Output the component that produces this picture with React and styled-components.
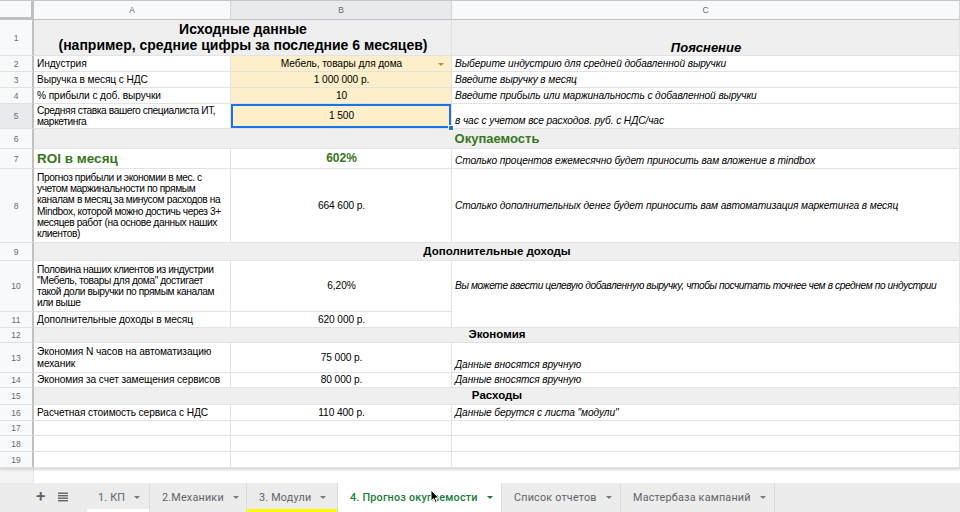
import React from "react";
import styled, { createGlobalStyle, css } from "styled-components";

const GlobalStyle = createGlobalStyle`
  html, body {
    margin: 0;
    padding: 0;
    background: #ffffff;
  }
  body {
    font-family: "Liberation Sans", Arial, sans-serif;
    color: #000;
  }
`;

const Page = styled.div`
  width: 960px;
  height: 512px;
  overflow: hidden;
  display: flex;
  flex-direction: column;
  position: relative;
  background: #fff;
`;

const Sheet = styled.div`
  display: grid;
  grid-template-columns: 34px 197px 221px 1fr;
  grid-template-rows: 19px 36px 16px 16px 16px 25px 20px 20px 74px 18px 51px 16px 15px 30px 15px 17px 16px 15px 16px 16px;
  border-top: 1px solid #c7c7c7;
  box-shadow: 0 2px 2px rgba(0, 0, 0, 0.12);
  position: relative;
  z-index: 1;
`;

const Corner = styled.div`
  background: #f8f9fa;
  border-right: 3px solid #c0c0c0;
  border-bottom: 3px solid #c0c0c0;
  box-sizing: border-box;
`;

const ColHead = styled.div`
  background: ${(p) => (p.$selected ? "#e8eaed" : "#f8f9fa")};
  border-right: 1px solid #d4d4d4;
  border-bottom: 1px solid #c0c0c0;
  box-sizing: border-box;
  display: flex;
  align-items: center;
  justify-content: center;
  font-size: 8.5px;
  color: #6b6b6b;
`;

const RowHead = styled.div`
  background: ${(p) => (p.$selected ? "#e8eaed" : "#f8f9fa")};
  border-right: 2px solid #c0c0c0;
  border-bottom: 1px solid #e0e0e0;
  box-sizing: border-box;
  display: flex;
  align-items: center;
  justify-content: center;
  font-size: 8.5px;
  color: #6b6b6b;
`;

const Cell = styled.div`
  grid-column: span ${(p) => p.$span || 1};
  background: ${(p) => p.$bg || "#fff"};
  border-right: 1px solid #e2e2e2;
  border-bottom: 1px solid ${(p) => (p.$noBottom ? "transparent" : "#e2e2e2")};
  box-sizing: border-box;
  padding: 0 2px 0 3px;
  display: flex;
  align-items: ${(p) =>
    p.$valign === "middle" ? "center" : p.$valign === "top" ? "flex-start" : "flex-end"};
  justify-content: ${(p) =>
    p.$align === "center" ? "center" : p.$align === "right" ? "flex-end" : "flex-start"};
  text-align: ${(p) => p.$align || "left"};
  font-size: ${(p) => p.$size || 10.2}px;
  line-height: ${(p) => p.$lh || "11.2px"};
  letter-spacing: ${(p) => (p.$tight ? "-0.4px" : p.$bold ? "0" : "-0.1px")};
  font-weight: ${(p) => (p.$bold ? 700 : 400)};
  font-style: ${(p) => (p.$italic ? "italic" : "normal")};
  color: ${(p) => p.$color || "#000"};
  white-space: pre;
  overflow: hidden;
  position: relative;
  padding-bottom: ${(p) => (p.$valign === "bottom" || !p.$valign ? "2px" : "0")};
  ${(p) =>
    p.$selected &&
    css`
      overflow: visible;
      box-shadow: inset 0 0 0 2px #1a73e8;
      z-index: 2;
    `}
`;

const Handle = styled.span`
  position: absolute;
  right: -3px;
  bottom: -3px;
  width: 6px;
  height: 6px;
  background: #1a73e8;
  border: 1px solid #fff;
  box-sizing: border-box;
`;

const DropArrow = styled.span`
  position: absolute;
  right: 7px;
  top: 7px;
  width: 0;
  height: 0;
  border-left: 3.5px solid transparent;
  border-right: 3.5px solid transparent;
  border-top: 3.5px solid #b8903c;
`;

const ScrollStrip = styled.div`
  height: 15px;
  display: flex;
  background: #fafafa;
`;

const StripLeft = styled.div`
  width: 33px;
  background: #f3f3f3;
  border-right: 1px solid #e4e4e4;
`;

const StripTrack = styled.div`
  flex: 1;
  background: #fff;
  margin-top: 3px;
`;

const TabBar = styled.div`
  height: 30px;
  background: #ececec;
  display: flex;
  align-items: stretch;
  font-family: Roboto, "Liberation Sans", sans-serif;
  font-size: 10.8px;
  letter-spacing: 0.2px;
`;

const TabTools = styled.div`
  width: 87px;
  display: flex;
  align-items: center;
  padding-left: 36px;
  gap: 12px;
  box-sizing: border-box;
  color: #5f6368;
`;

const Plus = styled.span`
  font-size: 17px;
  font-weight: 500;
  line-height: 1;
  margin-top: -2px;
`;

const Tab = styled.div`
  display: flex;
  align-items: center;
  gap: 9px;
  padding: 0 8px 0 ${(p) => p.$pl || 12}px;
  box-sizing: border-box;
  width: ${(p) => p.$w}px;
  background: ${(p) => (p.$active ? "#fff" : "transparent")};
  color: ${(p) => (p.$active ? "#188038" : "#5f6368")};
  font-weight: ${(p) => (p.$active ? 500 : 400)};
  border-right: 1px solid #dadce0;
  box-shadow: ${(p) =>
    p.$underline ? `inset 0 -3px 0 ${p.$underline}` : "none"};
  white-space: nowrap;
`;

const Caret = styled.span`
  width: 0;
  height: 0;
  border-left: 3.5px solid transparent;
  border-right: 3.5px solid transparent;
  border-top: 3.5px solid ${(p) => (p.$active ? "#188038" : "#7a7a7a")};
`;

const Cursor = styled.svg`
  position: absolute;
  left: 430px;
  top: 489px;
  z-index: 5;
`;

const GREY = "#efefef";
const YELLOW = "#fdefc9";
const GREEN = "#38761d";

const rows = [
  {
    n: 1,
    cells: [
      {
        span: 2,
        bg: GREY,
        align: "center",
        valign: "middle",
        bold: true,
        size: 14,
        lh: "15.5px",
        text: "Исходные данные\n(например, средние цифры за последние 6 месяцев)",
      },
      { bg: GREY, align: "center", bold: true, italic: true, size: 13, text: "Пояснение" },
    ],
  },
  {
    n: 2,
    cells: [
      { text: "Индустрия" },
      { bg: YELLOW, align: "center", valign: "middle", text: "Мебель, товары для дома", arrow: true },
      { italic: true, text: "Выберите индустрию для средней добавленной выручки" },
    ],
  },
  {
    n: 3,
    cells: [
      { text: "Выручка в месяц с НДС" },
      { bg: YELLOW, align: "center", valign: "middle", text: "1 000 000 р." },
      { italic: true, text: "Введите выручку в месяц" },
    ],
  },
  {
    n: 4,
    cells: [
      { text: "% прибыли с доб. выручки" },
      { bg: YELLOW, align: "center", valign: "middle", text: "10" },
      { italic: true, text: "Введите прибыль или маржинальность с добавленной выручки" },
    ],
  },
  {
    n: 5,
    selected: true,
    cells: [
      { text: "Средняя ставка вашего специалиста ИТ,\nмаркетинга", valign: "middle", tight: true },
      { bg: YELLOW, align: "center", valign: "middle", text: "1 500", selected: true },
      { italic: true, text: "в час с учетом все расходов. руб. с НДС/час" },
    ],
  },
  {
    n: 6,
    cells: [
      { span: 3, bg: GREY, align: "center", valign: "middle", bold: true, size: 13, color: GREEN, text: "Окупаемость" },
    ],
  },
  {
    n: 7,
    cells: [
      { bold: true, size: 13.5, color: GREEN, valign: "middle", text: "ROI в месяц" },
      { align: "center", valign: "middle", bold: true, size: 12, color: GREEN, text: "602%" },
      { italic: true, text: "Столько процентов ежемесячно будет приносить вам вложение в mindbox" },
    ],
  },
  {
    n: 8,
    cells: [
      {
        valign: "middle",
        tight: true,
        text: "Прогноз прибыли и экономии в мес. с\nучетом маржинальности по прямым\nканалам в месяц за минусом расходов на\nMindbox, которой можно достичь через 3+\nмесяцев работ (на основе данных наших\nклиентов)",
      },
      { align: "center", valign: "middle", text: "664 600 р." },
      { italic: true, valign: "middle", text: "Столько дополнительных денег будет приносить вам автоматизация маркетинга в месяц" },
    ],
  },
  {
    n: 9,
    cells: [
      { span: 3, bg: GREY, align: "center", valign: "middle", bold: true, size: 11.5, text: "Дополнительные доходы" },
    ],
  },
  {
    n: 10,
    cells: [
      {
        valign: "middle",
        tight: true,
        text: "Половина наших клиентов из индустрии\n\"Мебель, товары для дома\" достигает\nтакой доли выручки по прямым каналам\nили выше",
      },
      { align: "center", valign: "middle", text: "6,20%" },
      {
        italic: true,
        valign: "middle",
        noBottom: true,
        tight: true,
        text: "Вы можете ввести целевую добавленную выручку, чтобы посчитать точнее чем в среднем по индустрии",
      },
    ],
  },
  {
    n: 11,
    cells: [
      { text: "Дополнительные доходы в месяц" },
      { align: "center", valign: "middle", text: "620 000 р." },
      { text: "" },
    ],
  },
  {
    n: 12,
    cells: [
      { span: 3, bg: GREY, align: "center", valign: "middle", bold: true, size: 11.5, text: "Экономия" },
    ],
  },
  {
    n: 13,
    cells: [
      { valign: "middle", text: "Экономия N часов на автоматизацию\nмеханик" },
      { align: "center", valign: "middle", text: "75 000 р." },
      { italic: true, text: "Данные вносятся вручную" },
    ],
  },
  {
    n: 14,
    cells: [
      { valign: "middle", text: "Экономия за счет замещения сервисов" },
      { align: "center", valign: "middle", text: "80 000 р." },
      { italic: true, text: "Данные вносятся вручную" },
    ],
  },
  {
    n: 15,
    cells: [
      { span: 3, bg: GREY, align: "center", valign: "middle", bold: true, size: 11.5, text: "Расходы" },
    ],
  },
  {
    n: 16,
    cells: [
      { valign: "middle", text: "Расчетная стоимость сервиса с НДС" },
      { align: "center", valign: "middle", text: "110 400 р." },
      { italic: true, valign: "middle", text: "Данные берутся с листа \"модули\"" },
    ],
  },
  { n: 17, cells: [{ text: "" }, { text: "" }, { text: "" }] },
  { n: 18, cells: [{ text: "" }, { text: "" }, { text: "" }] },
  { n: 19, cells: [{ text: "" }, { text: "" }, { text: "" }] },
];

const tabs = [
  { label: "1. КП", w: 63, pl: 11, underline: "#ffffff" },
  { label: "2.Механики", w: 97 },
  { label: "3. Модули", w: 91, underline: "#ffff00" },
  { label: "4. Прогноз окупаемости", w: 164, active: true },
  { label: "Список отчетов", w: 119 },
  { label: "Мастербаза кампаний", w: 154 },
];

const ListIcon = () => (
  <svg width="10" height="10" viewBox="0 0 10 10">
    <rect x="0" y="0.5" width="10" height="1.4" fill="#5f6368" />
    <rect x="0" y="3" width="10" height="1.4" fill="#5f6368" />
    <rect x="0" y="5.5" width="10" height="1.4" fill="#5f6368" />
    <rect x="0" y="8" width="10" height="1.4" fill="#5f6368" />
  </svg>
);

export default function App() {
  return (
    <Page>
      <GlobalStyle />
      <Sheet>
        <Corner />
        <ColHead>A</ColHead>
        <ColHead $selected>B</ColHead>
        <ColHead>C</ColHead>
        {rows.map((row) => (
          <React.Fragment key={row.n}>
            <RowHead $selected={row.selected}>{row.n}</RowHead>
            {row.cells.map((c, i) => (
              <Cell
                key={i}
                $span={c.span}
                $bg={c.bg}
                $align={c.align}
                $valign={c.valign}
                $bold={c.bold}
                $italic={c.italic}
                $size={c.size}
                $lh={c.lh}
                $color={c.color}
                $noBottom={c.noBottom}
                $selected={c.selected}
                $tight={c.tight}
              >
                {c.text}
                {c.arrow && <DropArrow />}
                {c.selected && <Handle />}
              </Cell>
            ))}
          </React.Fragment>
        ))}
      </Sheet>
      <ScrollStrip>
        <StripLeft />
        <StripTrack />
      </ScrollStrip>
      <TabBar>
        <TabTools>
          <Plus>+</Plus>
          <ListIcon />
        </TabTools>
        {tabs.map((t) => (
          <Tab key={t.label} $w={t.w} $pl={t.pl} $active={t.active} $underline={t.underline}>
            {t.label}
            <Caret $active={t.active} />
          </Tab>
        ))}
      </TabBar>
      <Cursor width="10" height="15" viewBox="0 0 10 15">
        <path d="M1 1 L1 12 L3.6 9.6 L5.4 13.6 L7 12.9 L5.3 9 L8.8 9 Z" fill="#000" stroke="#fff" strokeWidth="1" />
      </Cursor>
    </Page>
  );
}
